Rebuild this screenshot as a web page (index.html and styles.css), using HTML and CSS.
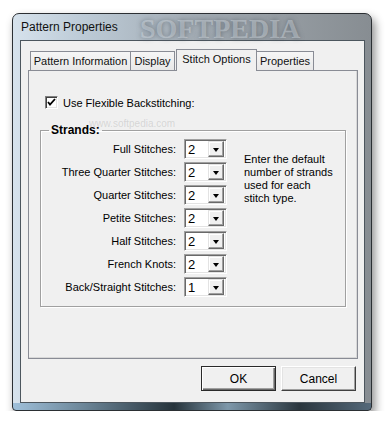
FILE: index.html
```html
<!DOCTYPE html>
<html lang="en">
<head>
  <meta charset="UTF-8">
  <title>Pattern Properties</title>
  <link rel="stylesheet" href="styles.css">
</head>
<body>
  <div class="window">
    <div class="titlebar">
      <span class="title">Pattern Properties</span>
      <span class="watermark">SOFTPEDIA</span>
    </div>

    <div class="client">
      <div class="tabs">
        <div class="tab tab-info">Pattern Information</div>
        <div class="tab tab-display">Display</div>
        <div class="tab tab-stitch active">Stitch Options</div>
        <div class="tab tab-props">Properties</div>
      </div>

      <div class="panel">
        <span class="mark-url">www.softpedia.com</span>

        <label class="check">
          <span class="box">
            <svg width="11" height="11" viewBox="0 0 11 11"><polyline points="2,5 4,7.5 9,2" fill="none" stroke="#000" stroke-width="1.8" /></svg>
          </span>
          Use Flexible Backstitching:
        </label>

        <fieldset class="group">
          <legend>Strands:</legend>
          <div class="group-body">
            <div class="rows">
              <span class="lbl">Full Stitches:</span>
              <div class="combo"><span class="val">2</span><span class="drop"></span></div>
              <span class="lbl">Three Quarter Stitches:</span>
              <div class="combo"><span class="val">2</span><span class="drop"></span></div>
              <span class="lbl">Quarter Stitches:</span>
              <div class="combo"><span class="val">2</span><span class="drop"></span></div>
              <span class="lbl">Petite Stitches:</span>
              <div class="combo"><span class="val">2</span><span class="drop"></span></div>
              <span class="lbl">Half Stitches:</span>
              <div class="combo"><span class="val">2</span><span class="drop"></span></div>
              <span class="lbl">French Knots:</span>
              <div class="combo"><span class="val">2</span><span class="drop"></span></div>
              <span class="lbl">Back/Straight Stitches:</span>
              <div class="combo"><span class="val">1</span><span class="drop"></span></div>
            </div>
            <p class="hint">Enter the default<br>number of strands<br>used for each<br>stitch type.</p>
          </div>
        </fieldset>
      </div>

      <div class="buttons">
        <button class="btn default">OK</button>
        <button class="btn">Cancel</button>
      </div>
    </div>
  </div>
</body>
</html>
```

FILE: styles.css
```css
body {
  margin: 0;
  background-color: #fff;
  font-family: 'Liberation Sans', Arial, sans-serif;
  font-size: 11px;
  color: #000;
}
.window {
  width: 360px;
  height: 398px;
  box-sizing: border-box;
  margin: 13px 0 0 12px;
  padding: 0 6px 7px 7px;
  border: 1px solid #2b2f33;
  border-radius: 7px 7px 4px 4px;
  background:
    linear-gradient(90deg, #9fc0da 0%, #6b8597 20%, #26333b 45%, #7e98aa 60%, #2a363e 80%, #55697a 100%) bottom / 100% 7px no-repeat,
    linear-gradient(90deg, #d6e2ec 0%, #bccad6 20%, #a3acb4 50%, #959ca2 75%, #878d92 100%);
  box-shadow: 3px 5px 10px rgba(0, 0, 0, 0.45);
}
.titlebar {
  position: relative;
  height: 26px;
}
.title {
  position: relative;
  z-index: 1;
  display: block;
  padding: 6px 0 0 1px;
  font-size: 12px;
  color: #111;
}
.watermark {
  position: absolute;
  left: 120px;
  top: 2px;
  font-family: 'Liberation Serif', serif;
  font-weight: bold;
  font-size: 28px;
  line-height: 26px;
  color: rgba(225, 232, 238, 0.4);
  text-shadow: 0 0 5px rgba(80, 90, 100, 0.7);
}
.client {
  height: 363px;
  box-sizing: border-box;
  border: 1px solid #4c565e;
  background-color: #f0f0f0;
}
.tabs {
  display: flex;
  align-items: flex-end;
  height: 21px;
  margin: 8px 0 0 9px;
  position: relative;
  z-index: 1;
}
.tab {
  height: 19px;
  box-sizing: border-box;
  border: 1px solid #898c95;
  border-bottom: none;
  background: linear-gradient(#f6f6f6, #e8e8e8);
  text-align: center;
  line-height: 18px;
  color: #111;
}
.tab-info { width: 101px; }
.tab-display { width: 45px; margin-left: -1px; }
.tab-stitch { width: 81px; margin-left: 1px; }
.tab-props { width: 58px; margin-left: -1px; }
.tab.active {
  height: 22px;
  margin-bottom: -1px;
  background: #f0f0f0;
  line-height: 18px;
}
.panel {
  position: relative;
  height: 289px;
  box-sizing: border-box;
  margin: 0 6px 0 7px;
  padding: 25px 11px 0 11px;
  border: 1px solid #898c95;
  box-shadow: inset -1px -1px #d8d8d8;
}
.mark-url {
  position: absolute;
  left: 60px;
  top: 47px;
  font-size: 10px;
  color: rgba(150, 150, 150, 0.3);
}
.check {
  display: flex;
  align-items: center;
  gap: 5px;
  height: 13px;
  margin-left: 5px;
  position: relative;
}
.box {
  width: 13px;
  height: 13px;
  box-sizing: border-box;
  border: 1px solid;
  border-color: #808080 #fff #fff #808080;
  box-shadow: inset 1px 1px #404040, inset -1px -1px #e3e3e3;
  background: #fff;
  display: flex;
  align-items: center;
  justify-content: center;
}
.group {
  position: relative;
  margin: 14px 0 0 0;
  padding: 0 0 9px 0;
  border: 1px solid #a0a0a0;
  box-shadow: 1px 1px #fff, inset 1px 1px #fff;
  min-width: 0;
}
.group legend {
  margin-left: 8px;
  padding: 0 2px;
  font-size: 12px;
  font-weight: bold;
  line-height: 14px;
}
.group-body {
  display: flex;
  padding-top: 2px;
}
.rows {
  display: grid;
  grid-template-columns: 135px 43px;
  column-gap: 8px;
  row-gap: 3px;
  align-items: center;
}
.lbl {
  text-align: right;
  white-space: nowrap;
}
.combo {
  display: flex;
  align-items: center;
  height: 20px;
  box-sizing: border-box;
  border: 1px solid;
  border-color: #a0a0a0 #fff #fff #a0a0a0;
  box-shadow: inset 1px 1px #696969, inset -1px -1px #e3e3e3;
  background: #fff;
  padding: 2px;
}
.val {
  flex: 1;
  padding-left: 1px;
  font-size: 13px;
}
.drop {
  position: relative;
  width: 16px;
  height: 16px;
  box-sizing: border-box;
  border: 1px solid;
  border-color: #e3e3e3 #696969 #696969 #e3e3e3;
  box-shadow: inset -1px -1px #a0a0a0, inset 1px 1px #fff;
  background: #f0f0f0;
}
.drop::after {
  content: '';
  position: absolute;
  left: 4px;
  top: 6px;
  border-left: 3.5px solid transparent;
  border-right: 3.5px solid transparent;
  border-top: 4px solid #000;
}
.hint {
  margin: 14px 0 0 17px;
  line-height: 13px;
}
.buttons {
  display: flex;
  justify-content: flex-end;
  gap: 5px;
  margin: 7px 8px 0 0;
}
.btn {
  width: 75px;
  height: 25px;
  box-sizing: border-box;
  border: 1px solid;
  border-color: #fff #404040 #404040 #fff;
  box-shadow: inset -1px -1px #a0a0a0, inset 1px 1px #e3e3e3;
  background: #f0f0f0;
  font-family: 'Liberation Sans', Arial, sans-serif;
  font-size: 12px;
  color: #000;
  padding: 0;
}
.btn.default {
  border-color: #2a2a2a;
  box-shadow: inset 1px 1px #fff, inset -1px -1px #696969, inset -2px -2px #a0a0a0;
}
```
